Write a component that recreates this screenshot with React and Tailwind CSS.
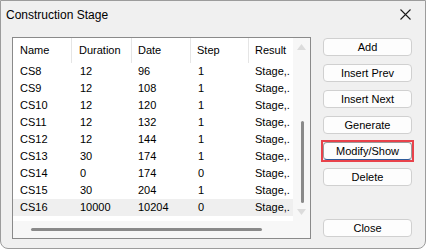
import React from "react";

const rows = [
  ["CS8", "12", "96", "1"],
  ["CS9", "12", "108", "1"],
  ["CS10", "12", "120", "1"],
  ["CS11", "12", "132", "1"],
  ["CS12", "12", "144", "1"],
  ["CS13", "30", "174", "1"],
  ["CS14", "0", "174", "0"],
  ["CS15", "30", "204", "1"],
  ["CS16", "10000", "10204", "0"],
];

const buttons = ["Add", "Insert Prev", "Insert Next", "Generate"];

const Btn = ({ children, focused }) => (
  <div
    className={
      "h-[18px] w-[89px] flex items-center justify-center rounded-[4px] bg-[#fdfdfd] text-[11px] text-black leading-none " +
      (focused ? "border border-[#9a9a9a] border-b-[#2d5a9a]" : "border border-[#d0d0d0]")
    }
  >
    {children}
  </div>
);

const App = () => {
  return (
    <div className="w-[426px] h-[251px] bg-white" style={{ fontFamily: '"Liberation Sans", Arial, sans-serif' }}>
      <div className="w-[426px] h-[249px] bg-[#f0f0f0] border border-[#9c9c9c] rounded-b-[8px] flex flex-col overflow-hidden">
        {/* title bar */}
        <div className="h-[27px] flex items-center justify-between pl-[5px] pr-[14px]">
          <span className="text-[12px] text-black">Construction Stage</span>
          <svg width="11" height="11" viewBox="0 0 11 11">
            <path d="M0.5 0.5 L10.5 10.5 M10.5 0.5 L0.5 10.5" stroke="#1a1a1a" strokeWidth="1.1" />
          </svg>
        </div>

        <div className="flex pl-[11px] pt-[9px]">
          {/* list */}
          <div className="w-[299px] h-[202px] border border-[#8a8a8a] bg-white flex flex-col text-[11px] text-black">
            <div className="flex h-[183px]">
              <div className="w-[280px] flex flex-col">
                <div className="grid grid-cols-[59px_60px_59px_58px_44px] h-[25px]">
                  <div className="pl-[7px] flex items-center border-r border-[#e5e5e5]">Name</div>
                  <div className="pl-[7px] flex items-center border-r border-[#e5e5e5]">Duration</div>
                  <div className="pl-[6px] flex items-center border-r border-[#e5e5e5]">Date</div>
                  <div className="pl-[6px] flex items-center border-r border-[#e5e5e5]">Step</div>
                  <div className="pl-[6px] flex items-center overflow-hidden whitespace-nowrap">Result</div>
                </div>
                {rows.map((r, i) => (
                  <div
                    key={r[0]}
                    className={
                      "grid grid-cols-[59px_60px_59px_58px_44px] h-[17px] items-center " +
                      (i === rows.length - 1 ? "bg-[#efefef]" : "")
                    }
                  >
                    <div className="pl-[7px]">{r[0]}</div>
                    <div className="pl-[8px]">{r[1]}</div>
                    <div className="pl-[6px]">{r[2]}</div>
                    <div className="pl-[7px]">{r[3]}</div>
                    <div className="pl-[6px] overflow-hidden whitespace-nowrap">Stage,.</div>
                  </div>
                ))}
              </div>
              {/* vertical scrollbar */}
              <div className="w-[17px] bg-[#f7f7f7] flex flex-col items-center">
                <svg width="9" height="6" viewBox="0 0 9 6" className="mt-[6px]">
                  <path d="M0 6 L4.5 0 L9 6 Z" fill="#dcdcdc" />
                </svg>
                <div className="w-[3px] h-[82px] bg-[#8a8a8a] rounded-full mt-[71px] ml-[1px]" />
                <svg width="9" height="6" viewBox="0 0 9 6" className="mt-[6px]">
                  <path d="M0 0 L4.5 6 L9 0 Z" fill="#dcdcdc" />
                </svg>
              </div>
            </div>
            {/* horizontal scrollbar */}
            <div className="h-[17px] flex bg-[#f7f7f7]">
              <div className="w-[280px] flex items-center">
                <div className="ml-[18px] w-[231px] h-[3px] bg-[#8a8a8a] rounded-full" />
              </div>
              <div className="w-[17px]" />
            </div>
          </div>

          {/* buttons */}
          <div className="flex flex-col ml-[12px] pt-[1px]">
            <div className="flex flex-col gap-[8px]">
              {buttons.map((b) => (
                <Btn key={b}>{b}</Btn>
              ))}
              <div className="-m-[2px] border-2 border-[#e8424b]">
                <Btn focused>Modify/Show</Btn>
              </div>
              <Btn>Delete</Btn>
            </div>
            <div className="mt-[33px]">
              <Btn>Close</Btn>
            </div>
          </div>
        </div>
      </div>
    </div>
  );
};

export default App;
